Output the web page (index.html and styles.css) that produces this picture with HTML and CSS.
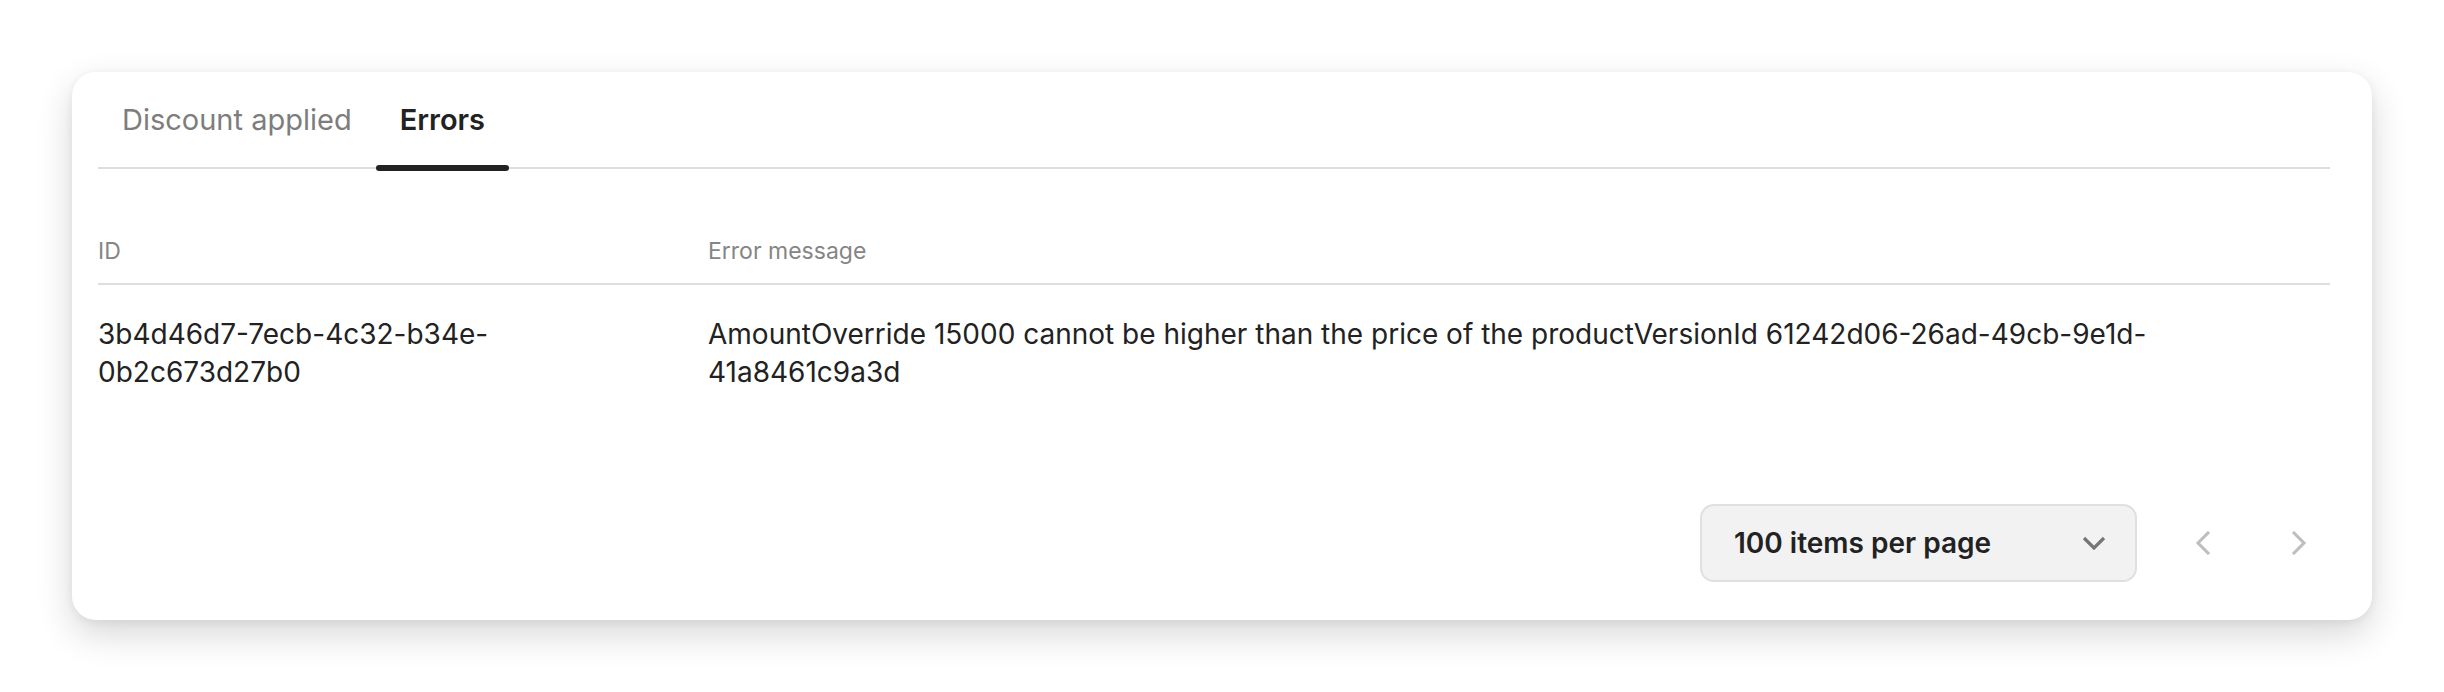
FILE: index.html
```html
<!doctype html>
<html lang="en">
<head>
    <meta charset="UTF-8"/>
    <meta name="viewport" content="width=device-width, initial-scale=1.0"/>
    <title>Discount errors</title>
    <link rel="stylesheet" href="styles.css">
</head>
<body>
<div class="card">
    <div class="tabs">
        <button type="button" class="tab">Discount applied</button>
        <button type="button" class="tab active">Errors</button>
    </div>

    <table class="errors">
        <thead>
        <tr>
            <th class="col-id">ID</th>
            <th>Error message</th>
        </tr>
        </thead>
        <tbody>
        <tr>
            <td class="col-id">3b4d46d7-7ecb-4c32-b34e-0b2c673d27b0</td>
            <td>AmountOverride 15000 cannot be higher than the price of the productVersionId 61242d06-26ad-49cb-9e1d-41a8461c9a3d</td>
        </tr>
        </tbody>
    </table>

    <div class="pager">
        <button type="button" class="page-size">
            <span>100 items per page</span>
            <svg width="24" height="14" viewBox="0 0 24 14"><path d="M2 2 L12 12 L22 2" fill="none" stroke="#767676" stroke-width="3.2"/></svg>
        </button>
        <button type="button" class="page-btn" aria-label="Previous page">
            <svg width="16" height="24" viewBox="0 0 16 24"><path d="M14 1 L3 12 L14 23" fill="none" stroke="#bdbdbd" stroke-width="3"/></svg>
        </button>
        <button type="button" class="page-btn" aria-label="Next page">
            <svg width="16" height="24" viewBox="0 0 16 24"><path d="M2 1 L13 12 L2 23" fill="none" stroke="#bdbdbd" stroke-width="3"/></svg>
        </button>
    </div>
</div>
</body>
</html>
```

FILE: styles.css
```css
body {
    font-family: Inter, "Noto Sans", sans-serif;
    color: #222;
    background: #fff;
    margin: 0;
    padding: 72px;
}

.card {
    background: #fff;
    border-radius: 24px;
    padding: 0 42px 38px 26px;
    box-shadow: 0 14px 36px rgba(0, 0, 0, 0.16), 0 2px 8px rgba(0, 0, 0, 0.06);
}

.tabs {
    display: flex;
    border-bottom: 2px solid #dedede;
}

.tab {
    position: relative;
    background: none;
    border: none;
    font-family: inherit;
    font-size: 29px;
    line-height: 40px;
    padding: 28px 24px 27px;
    color: #7d7d7d;
    cursor: pointer;
}

.tab.active {
    color: #222;
    font-weight: 600;
}

.tab.active::after {
    content: "";
    position: absolute;
    left: 0;
    right: 0;
    bottom: -4px;
    height: 6px;
    border-radius: 3px;
    background: #222;
}

.errors {
    width: 100%;
    table-layout: fixed;
    border-collapse: collapse;
    margin-top: 66px;
}

.errors th,
.errors td {
    box-sizing: border-box;
    text-align: left;
}

.errors th {
    font-weight: 400;
    font-size: 23px;
    line-height: 32px;
    color: #858585;
    padding: 0 40px 16px 0;
    border-bottom: 2px solid #dedede;
}

.errors td {
    font-size: 28px;
    line-height: 38px;
    vertical-align: top;
    padding: 30px 40px 0 0;
}

.col-id {
    width: 610px;
}

.pager {
    display: flex;
    justify-content: flex-end;
    align-items: center;
    gap: 24px;
    margin-top: 113px;
    margin-right: -5px;
}

.page-size {
    display: flex;
    align-items: center;
    justify-content: space-between;
    width: 437px;
    height: 78px;
    padding: 0 29px 0 32px;
    background: #f2f2f2;
    border: 2px solid #e0e0e0;
    border-radius: 14px;
    font-family: inherit;
    font-size: 28px;
    font-weight: 600;
    color: #222;
    cursor: pointer;
    margin-right: 6px;
}

.page-btn {
    display: flex;
    align-items: center;
    justify-content: center;
    width: 72px;
    height: 78px;
    background: none;
    border: none;
    padding: 0;
    cursor: pointer;
}
```
